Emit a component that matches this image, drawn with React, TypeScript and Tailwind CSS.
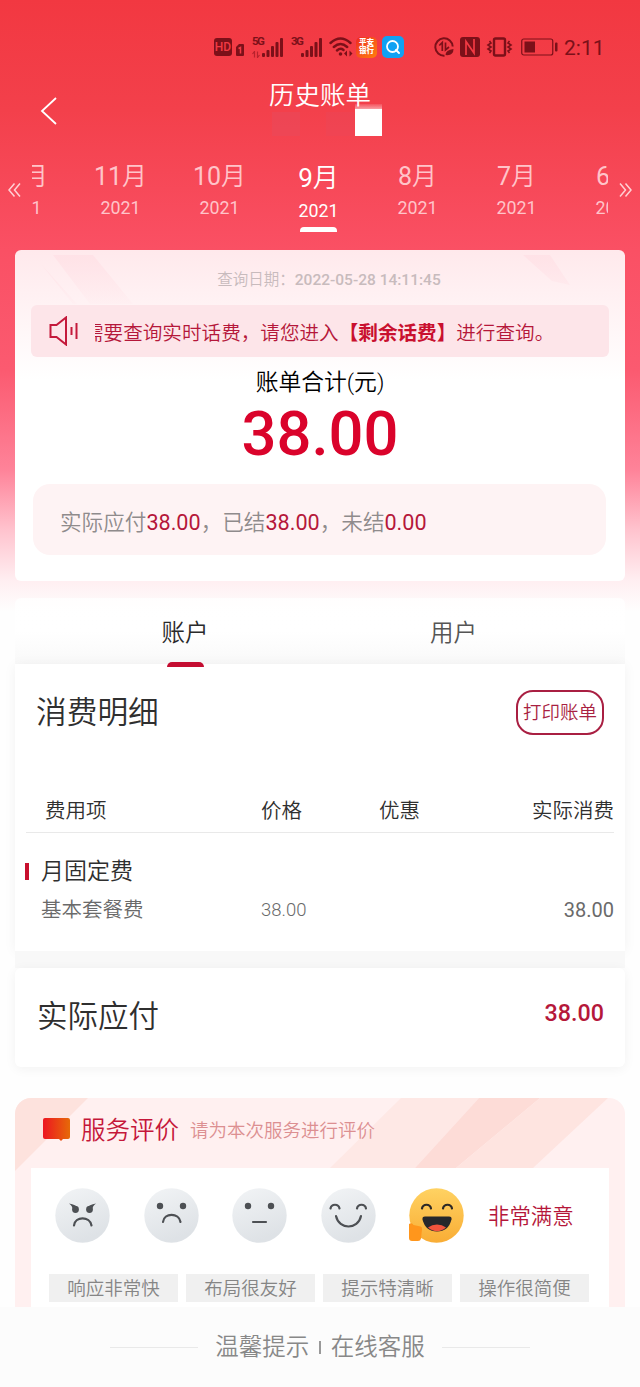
import { ReactNode } from "react";
import { clsx } from "clsx";

const months = [
  { month: "12月", year: "2021" },
  { month: "11月", year: "2021" },
  { month: "10月", year: "2021" },
  { month: "9月", year: "2021", active: true },
  { month: "8月", year: "2021" },
  { month: "7月", year: "2021" },
  { month: "6月", year: "2021" },
];

const tags = ["响应非常快", "布局很友好", "提示特清晰", "操作很简便"];

function Signal() {
  return (
    <svg width="22" height="20" viewBox="0 0 22 20" fill="#7c1019">
      <rect x="0" y="16" width="3" height="4" rx="1" />
      <rect x="4.5" y="13" width="3" height="7" rx="1" />
      <rect x="9" y="9" width="3" height="11" rx="1" />
      <rect x="13.500" y="5" width="3" height="15" rx="1" />
      <rect x="18" y="1" width="3" height="19" rx="1" />
    </svg>
  );
}

function StatusBar() {
  return (
    <div className="flex h-[72px] items-start pl-[214px] pt-[35px] text-[#7c1019]">
      <div className="flex h-6 w-[200px] shrink-0 items-center">
        <div className="flex h-[18px] w-[18px] shrink-0 items-center justify-center rounded-[3px] bg-[#7c1019] text-[12px] font-medium text-[#f23a44]">
          HD
        </div>
        <svg className="ml-1 mt-1.5 shrink-0" width="8" height="12" viewBox="0 0 8 12">
          <path d="M3 0h4a1 1 0 0 1 1 1v10a1 1 0 0 1-1 1H1a1 1 0 0 1-1-1V3z" fill="#7c1019" />
          <path d="M2.500 4.500 4.500 3.500V9.500" fill="none" stroke="#f23a44" strokeWidth="1.500" />
        </svg>
        <div className="ml-2 flex w-[32px] items-start">
          <div className="w-[10px] shrink-0">
            <p className="-mt-0.5 text-[11.500px] font-bold leading-[12px] tracking-[-1.5px]">5G</p>
            <svg className="mt-1" width="8" height="7" viewBox="0 0 8 7" fill="none" stroke="#b8222d" strokeWidth="1.200">
              <path d="M2.500 6.500v-6L.5 3M5.500.5v6l2-2.500" />
            </svg>
          </div>
          <Signal />
        </div>
        <div className="ml-[7px] flex w-[32px] items-start">
          <p className="-mt-0.5 w-[10px] shrink-0 text-[11.500px] font-bold leading-[12px] tracking-[-1.5px]">3G</p>
          <Signal />
        </div>
        <svg className="ml-[6px] shrink-0" width="24" height="20" viewBox="0 0 24 20" fill="none" stroke="#7c1019" strokeWidth="2.400" strokeLinecap="round">
          <path d="M1.500 6Q11.500-3 21.500 6M4.800 10Q11.500 4 18.200 10M8 13.500Q11.500 10.500 14.500 13" />
          <circle cx="11.500" cy="17" r="1.800" fill="#7c1019" stroke="none" />
          <path d="m15 16.500 3-3v6zM23.500 16.500l-3-3v6z" fill="#7c1019" stroke="none" />
        </svg>
        <div className="ml-[3px] flex h-[21px] w-[21px] shrink-0 flex-col items-center justify-center rounded-[5px] bg-linear-to-br from-[#ee1f1f] to-[#ff7d0a] text-[7.500px] font-black leading-[8px] text-white">
          <span>平安</span>
          <span>银行</span>
        </div>
        <svg className="ml-[5px] shrink-0" width="22" height="22" viewBox="0 0 22 22">
          <rect width="22" height="22" rx="5" fill="#11a1f3" />
          <circle cx="10.500" cy="10.500" r="5.500" fill="none" stroke="#fff" strokeWidth="1.800" />
          <path d="m14 14 3 3" stroke="#fff" strokeWidth="2" strokeLinecap="round" />
        </svg>
      </div>
      <div className="ml-5 flex h-6 items-center">
        <svg width="20" height="20" viewBox="0 0 20 20" fill="none" stroke="#7c1019" strokeWidth="2">
          <path d="M18.700 9.500A8.700 8.700 0 1 0 10.500 18.700" />
          <path d="M8.300 14V5.500L5.300 8.500M11.500 5.500V13l3.500-3" strokeWidth="1.700" />
          <path d="M11.500 18q0-5 8-6 0 7-8 6" fill="#7c1019" stroke="none" />
        </svg>
        <svg className="ml-1.5" width="20" height="20" viewBox="0 0 20 20">
          <rect width="20" height="20" rx="3" fill="#7c1019" />
          <path d="M6 18V4.500L14 16V2" fill="none" stroke="#f23a44" strokeWidth="1.700" />
        </svg>
        <svg className="ml-1.5" width="27" height="20" viewBox="0 0 27 20" fill="none" stroke="#7c1019" strokeWidth="2">
          <rect x="8" y="1.500" width="11" height="17" rx="1.500" strokeWidth="2.400" />
          <path d="m3.500 4 1.500 2-3 2 3 2-3 2 3 2-1.500 2M23.500 4 22 6l3 2-3 2 3 2-3 2 1.500 2" strokeWidth="1.600" />
        </svg>
        <svg className="ml-2" width="37" height="18" viewBox="0 0 37 18">
          <rect x=".75" y="1" width="31" height="16" rx="2" fill="none" stroke="#7c1019" strokeWidth="1.200" />
          <rect x="3.500" y="3.500" width="10.500" height="11" fill="#7c1019" />
          <rect x="34" y="4.500" width="2.500" height="9" rx="1" fill="#7c1019" />
        </svg>
        <span className="ml-[6px] pt-0.5 text-[21px] leading-6">2:11</span>
      </div>
    </div>
  );
}

function Header() {
  return (
    <div className="flex h-[86px] text-white">
      <svg className="ml-[40px] mt-[24px] shrink-0" width="18" height="30" viewBox="0 0 18 30" fill="none" stroke="#fff" strokeWidth="1.800">
        <path d="M16 2 2 15l14 13" />
      </svg>
      <div className="relative ml-[211px] mt-[7px] w-[102px]">
        <h1 className="whitespace-nowrap text-[25.500px] font-[350] leading-[32px]">历史账单</h1>
        <div className="absolute left-[3px] top-[33px] h-6 w-[28px] bg-[#e8495c]/50" />
        <div className="absolute left-[57px] top-[33px] h-6 w-[28px] bg-[#e8495c]/30" />
        <div className="absolute left-[86px] top-[25px] h-[5px] w-[27px] bg-linear-to-b from-white/10 to-white/50" />
        <div className="absolute left-[86px] top-[30px] h-[27px] w-[27px] bg-white" />
      </div>
    </div>
  );
}

function Arrows({ flip = false }: { flip?: boolean }) {
  return (
    <svg className={clsx("mt-[25px] shrink-0", flip && "rotate-180")} width="13" height="14" viewBox="0 0 13 14" fill="none" stroke="#ffd0d4" strokeWidth="1.500">
      <path d="M6.500.5 1 7l5.500 6.500M12 .5 6.500 7l5.500 6.500" />
    </svg>
  );
}

function MonthPicker() {
  return (
    <div className="flex h-[92px] justify-between px-2">
      <Arrows />
      <div className="flex w-[576px] justify-center overflow-hidden pr-[3px]">
        {months.map((m) => (
          <div
            key={m.month}
            className={clsx(
              "flex w-[99px] shrink-0 flex-col items-center",
              m.active ? "text-white" : "text-[#ffc4c9]"
            )}
          >
            <span className={clsx("leading-[30px]", m.active ? "mt-[5px] text-[26px]" : "mt-[4px] text-[25px]")}>
              {m.month.replace("月", "")}
              <span className="font-[350]">月</span>
            </span>
            <span className={clsx("text-[17.800px] leading-[20px]", m.active ? "mt-[8px]" : "mt-[6px]")}>{m.year}</span>
            {m.active && <div className="mt-[6px] h-[5px] w-[37px] rounded-t-[4px] bg-white" />}
          </div>
        ))}
      </div>
      <Arrows flip />
    </div>
  );
}

function SummaryCard() {
  return (
    <div className="relative mx-[15px] h-[331px] overflow-hidden rounded-md bg-linear-to-b from-[#ffe9ec] to-white to-[130px]">
      <svg className="absolute left-0 top-0" width="610" height="70" viewBox="0 0 610 70">
        <defs>
          <linearGradient id="beam" x1="0" y1="0" x2="0" y2="1">
            <stop stopColor="#ffdde3" stopOpacity=".6" />
            <stop offset="1" stopColor="#ffdde3" stopOpacity=".1" />
          </linearGradient>
        </defs>
        <path d="M38 5h40l40 49H75zM26 14l36 40h-4zM508 5h27l20 30-18-4z" fill="url(#beam)" />
      </svg>
      <div className="relative">
        <p className="pl-[18px] pt-[20px] text-center text-[15.500px] font-[350] leading-[20px] text-[#c8bbbd]">
          查询日期：<span className="font-medium">2022-05-28 14:11:45</span>
        </p>
        <div className="ml-[16px] mt-[15px] flex h-[52px] w-[578px] items-center rounded-md bg-[#fde5e9] pl-[18px] text-[#b5173a]">
          <svg className="shrink-0" width="29" height="30" viewBox="0 0 29 30" fill="none" stroke="#c4193b" strokeWidth="2">
            <path d="M1.500 9h6l9.500-7.500v27L7.500 21h-6zM22.500 11v8M27.500 7v16" />
          </svg>
          <div className="ml-[17px] flex w-[460px] overflow-hidden">
            <p className="-ml-[11px] whitespace-nowrap pt-[5px] text-[19.600px] font-[350] leading-[28px]">
              需要查询实时话费，请您进入<b className="text-[#c9102f]">【剩余话费】</b>进行查询。
            </p>
          </div>
        </div>
        <p className="mt-[11px] text-center text-[22.800px] font-[350] leading-[30px] text-black">
          账单合计<span className="font-light">(</span>元<span className="font-light">)</span>
        </p>
        <p className="mt-[3px] text-center text-[61.500px] font-medium leading-[66px] text-[#da032b]">38.00</p>
        <div className="ml-[18px] mt-[17px] flex h-[71px] w-[573px] items-center rounded-[17px] bg-[#fef3f4] pl-[27px] text-[21.600px] text-[#8f8b8c]">
          <p className="whitespace-nowrap pt-[7px] font-[350] [&>span]:font-normal [&>span]:text-[#b5173a]">
            实际应付<span>38.00</span>，已结<span>38.00</span>，未结<span>0.00</span>
          </p>
        </div>
      </div>
    </div>
  );
}

function Tabs() {
  return (
    <div className="mx-[15px] mt-[17px] flex h-[66px] rounded-t-md bg-linear-to-b from-white/80 via-white via-50% to-[#f9f9f9] text-[23.500px] font-[350] text-[#555]">
      <div className="flex w-[340px] flex-col items-center pt-[19px] text-[#2a2a2a]">
        <span className="leading-[32px]">账户</span>
        <div className="relative z-10 mt-[13px] h-[5px] w-[37px] shrink-0 rounded-t-[5px] bg-[#c40d31]" />
      </div>
      <div className="ml-[75px] pt-[19px] leading-[32px]">用户</div>
    </div>
  );
}

function BillDetail() {
  return (
    <div className="mx-[15px] h-[287px] bg-white text-[20.500px] font-[350] text-[#2f2f2f] shadow-[0_1px_12px_rgba(0,0,0,0.05)]">
      <div className="flex items-start justify-between pl-[21px] pr-[21px] pt-[26px]">
        <h2 className="mt-px text-[30.700px] leading-[44px]">消费明细</h2>
        <button className="flex h-[45px] w-[88px] items-center justify-center whitespace-nowrap rounded-[17px] border-2 border-[#a91f42] pt-[3px] text-[18.500px] text-[#a91f42]">
          打印账单
        </button>
      </div>
      <div className="mx-[11px] mt-[60px] grid h-[38px] grid-cols-[216px_118px_1fr_auto] border-b border-[#e9e9e9] pl-[19px] leading-[32px]">
        <span>费用项</span>
        <span>价格</span>
        <span>优惠</span>
        <span>实际消费</span>
      </div>
      <div className="ml-[10px] mt-[21px] flex h-[34px] items-center">
        <div className="h-[17px] w-1 bg-[#c8102e]" />
        <span className="ml-[12px] pt-[3px] text-[23px]">月固定费</span>
      </div>
      <div className="ml-[26px] mr-[11px] mt-[6px] grid grid-cols-[220px_1fr_auto] leading-[32px] text-[#6a6a6a]">
        <span>基本套餐费</span>
        <span className="text-[18.500px] font-light">38.00</span>
        <span className="text-[20px] font-normal">38.00</span>
      </div>
    </div>
  );
}

function Face({ children }: { children: ReactNode }) {
  return (
    <svg width="55" height="55" viewBox="0 0 55 55" fill="none" stroke="#4d5054" strokeWidth="2.200" strokeLinecap="round">
      <defs>
        <linearGradient id="face" x1="0" y1="0" x2="0.4" y2="1">
          <stop stopColor="#f2f4f6" />
          <stop offset="1" stopColor="#dee2e6" />
        </linearGradient>
      </defs>
      <circle cx="27.500" cy="27.500" r="27.200" fill="url(#face)" stroke="none" />
      {children}
    </svg>
  );
}

function Faces() {
  return (
    <div className="flex h-[55px] gap-[33.500px]">
      <Face>
        <g fill="#4d5054" stroke="none">
          <circle cx="20.500" cy="21.500" r="3.400" />
          <path d="M14 15.500q7 1 9.500 4.500l-5.500 3q0-5-4-7.500" />
          <circle cx="34.500" cy="21.500" r="3.400" />
          <path d="M41 15.500q-7 1-9.500 4.500l5.500 3q0-5 4-7.500" />
        </g>
        <path d="M19 37.500c1-9.500 16-9.500 17.500 0" />
      </Face>
      <Face>
        <circle cx="16" cy="18" r="3.200" fill="#4d5054" stroke="none" />
        <circle cx="39" cy="18" r="3.200" fill="#4d5054" stroke="none" />
        <path d="M19 34c1-9.500 16-9.500 17.500 0" />
      </Face>
      <Face>
        <circle cx="16" cy="18" r="3.200" fill="#4d5054" stroke="none" />
        <circle cx="39" cy="18" r="3.200" fill="#4d5054" stroke="none" />
        <path d="M21 34h13" />
      </Face>
      <Face>
        <path d="M9.500 20.500c1-5 8-5 9 0M36 20.500c1-5 8-5 9 0M15 28c3 14 22 14 25 0" />
      </Face>
      <svg width="55" height="55" viewBox="0 0 55 55" fill="none" strokeLinecap="round">
        <defs>
          <linearGradient id="happy" x1="0" y1="0" x2="0" y2="1">
            <stop stopColor="#ffd262" />
            <stop offset="1" stopColor="#f9ad35" />
          </linearGradient>
        </defs>
        <circle cx="27.500" cy="27.500" r="27.200" fill="url(#happy)" />
        <path d="M13 20.500c1-5 8-5 9 0M34 20.500c1-5 8-5 9 0" stroke="#2d2926" strokeWidth="2.200" />
        <path d="M16 28.500h24q3 0 2.500 3-3 12-14.500 12t-14.500-12q-.5-3 2.500-3z" fill="#27272b" />
        <path d="M19 39.500q4-3 9-3t9 3q-9 7.500-18 0" fill="#f2543d" />
        <path d="M0 36q3-2 4.500 1l7 1.500q2 .5 1.500 3l-1 9q-.5 2.500-3 2.500H3q-3 0-3-3z" fill="#ff961c" />
      </svg>
    </div>
  );
}

function ReviewCard() {
  return (
    <div className="relative mx-[15px] mt-[31px] h-[209px] overflow-hidden rounded-t-[16px] bg-[#fff0f0]">
      <svg className="absolute left-0 top-0" width="610" height="74" viewBox="0 0 610 74">
        <path d="M0 0h73L0 73z" fill="#fde2dd" />
        <path d="M386 0h78l-64 70h-85z" fill="#fee8e5" />
        <path d="M464 0h61l-84 70h-41z" fill="#fddcd7" />
        <path d="M525 0h68l-75 70h-77z" fill="#fee4e0" />
      </svg>
      <div className="relative flex h-[70px] items-center pl-[28px] pb-[7px]">
        <svg width="27" height="23" viewBox="0 0 27 23">
          <defs>
            <linearGradient id="bubble">
              <stop stopColor="#ed1521" />
              <stop offset="1" stopColor="#e66a08" />
            </linearGradient>
          </defs>
          <path d="M2 0h23q2 0 2 2v17q0 2-2 2h-5l-2 2-2-2H2q-2 0-2-2V2q0-2 2-2z" fill="url(#bubble)" />
        </svg>
        <span className="ml-[11px] pt-[3px] text-[24.500px] font-[350] text-[#c5173a]">服务评价</span>
        <span className="ml-[11px] pt-[4px] text-[18.500px] font-[350] text-[#dc8f91]">请为本次服务进行评价</span>
      </div>
      <div className="relative mx-[16px] h-[139px] bg-white px-[18px] pt-[20px]">
        <div className="flex items-center pl-[6px]">
          <Faces />
          <span className="ml-[24px] whitespace-nowrap pt-[3px] text-[21.400px] font-[350] text-[#b5173a]">非常满意</span>
        </div>
        <div className="mt-[31px] flex gap-[8px]">
          {tags.map((tag) => (
            <div key={tag} className="flex h-[28px] w-[129px] shrink-0 items-center justify-center bg-[#f0f0f0] pt-[4px] text-[18.500px] font-[350] text-[#858585]">
              {tag}
            </div>
          ))}
        </div>
      </div>
    </div>
  );
}

export default function App() {
  return (
    <div className="h-[1387px] w-[640px] overflow-hidden bg-[#fefefe] font-['Roboto','Noto_Sans_CJK_SC',sans-serif]">
      <div className="bg-[linear-gradient(#f23841_0px,#f3404b_110px,#fa5064_250px,#fb5a70_370px,#fe8399_470px,#ffc3ce_530px,#ffeef1_580px,#fefefe_612px)]">
        <StatusBar />
        <Header />
        <MonthPicker />
        <SummaryCard />
        <Tabs />
      </div>
      <BillDetail />
      <div className="mx-[15px] h-[17px] bg-[#f8f8f8]" />
      <div className="mx-[15px] flex h-[99px] items-center justify-between rounded-md bg-white pl-[22px] pr-[21px] shadow-[0_2px_12px_rgba(0,0,0,0.05)]">
        <span className="pb-[2px] text-[30.500px] font-[350] text-[#2f2f2f]">实际应付</span>
        <span className="pb-[8px] text-[23.300px] font-medium text-[#b5173a]">38.00</span>
      </div>
      <ReviewCard />
      <div className="flex h-[80px] items-center justify-center bg-[#fcfcfc] text-[23.500px] font-[350] text-[#888]">
        <div className="h-px w-[88px] bg-[#e9e9e9]" />
        <span className="ml-[17px] pt-[2px]">温馨提示</span>
        <div className="mx-[10px] h-[13px] w-[1.500px] bg-[#999]" />
        <span className="mr-[17px] pt-[2px]">在线客服</span>
        <div className="h-px w-[88px] bg-[#e9e9e9]" />
      </div>
    </div>
  );
}
